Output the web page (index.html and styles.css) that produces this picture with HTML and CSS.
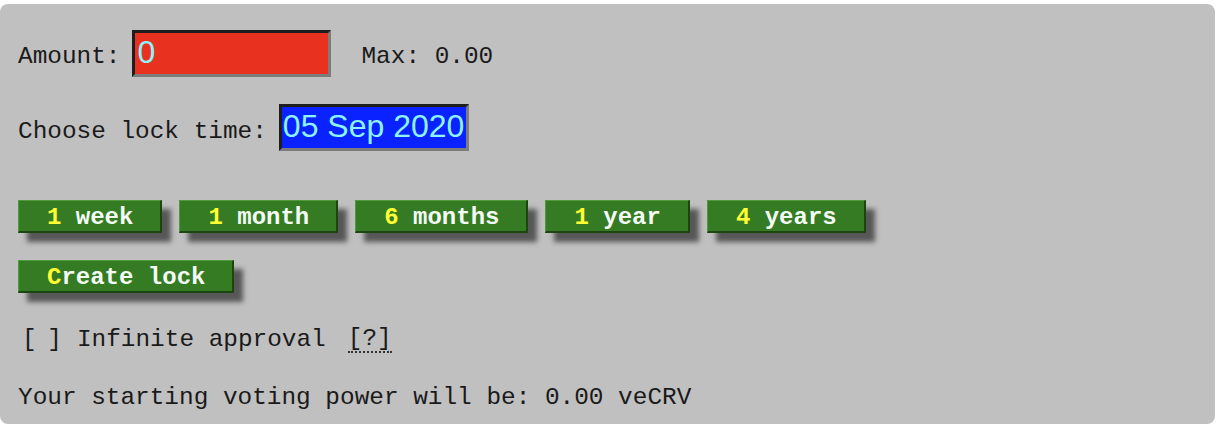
FILE: index.html
```html
<!DOCTYPE html>
<html>
<head>
<meta charset="utf-8">
<link rel="stylesheet" href="styles.css">
</head>
<body>
<div class="panel">
  <div class="row row-amount">
    <label class="lbl" for="amount">Amount:</label>
    <input id="amount" class="inp inp-amount" type="text" value="0">
    <span class="max">Max: 0.00</span>
  </div>
  <div class="row row-time">
    <label class="lbl" for="locktime">Choose lock time:</label>
    <input id="locktime" class="inp inp-date" type="text" value="05 Sep 2020">
  </div>
  <div class="periods">
    <button class="btn">1 week</button>
    <button class="btn">1 month</button>
    <button class="btn">6 months</button>
    <button class="btn">1 year</button>
    <button class="btn">4 years</button>
  </div>
  <div class="create">
    <button class="btn">Create lock</button>
  </div>
  <div class="approval">
    <span class="chk">[ ]</span><span class="chk-label">Infinite approval</span><span class="help">[?]</span>
  </div>
  <div class="power">Your starting voting power will be: 0.00 veCRV</div>
</div>
</body>
</html>
```
FILE: styles.css
```css
html, body {
  margin: 0;
  padding: 0;
  background: #ffffff;
}
body {
  padding-top: 4px;
  width: 1220px;
  height: 424px;
  overflow: hidden;
  box-sizing: border-box;
}
.panel {
  width: 1215px;
  height: 420px;
  box-sizing: border-box;
  background: #c0c0c0;
  border-radius: 8px;
  padding: 26px 0 0 18px;
  font-family: "Liberation Mono", "DejaVu Sans Mono", monospace;
  font-size: 24.4px;
  color: #1a1a1a;
}
.row {
  display: flex;
  align-items: center;
  height: 47px;
}
.row-time {
  margin-top: 27px;
}
.lbl {
  margin-right: 12px;
  padding-top: 5px;
}
.row-time .lbl {
  padding-top: 7px;
}
.inp {
  box-sizing: border-box;
  height: 47px;
  margin: 0;
  padding: 0 2px 2px 2px;
  border-style: solid;
  border-width: 3px;
  border-color: #1e1e1e #7c7c7c #7c7c7c #1e1e1e;
  font-family: "Liberation Sans", Arial, sans-serif;
  font-size: 32px;
  color: #8ef2ff;
  outline: none;
}
.inp-amount {
  width: 199px;
  background: #e8321f;
}
.inp-date {
  width: 190px;
  padding-left: 1px;
  background: #0a22ff;
}
.max {
  margin-left: 30px;
  padding-top: 5px;
}
.periods {
  display: flex;
  gap: 17px;
  margin-top: 49px;
}
.create {
  display: flex;
  margin-top: 27px;
}
.btn {
  box-sizing: border-box;
  height: 33px;
  margin: 0;
  padding: 4px 27px 0 28px;
  background: #357b23;
  border-style: solid;
  border-width: 1px 2px 2px 1px;
  border-color: #4f9a3a #1d4512 #1d4512 #4f9a3a;
  box-shadow: 9px 9px 5px rgba(0, 0, 0, 0.55);
  font-family: "Liberation Mono", "DejaVu Sans Mono", monospace;
  font-weight: bold;
  font-size: 24px;
  line-height: 26px;
  color: #f4fbf6;
  cursor: pointer;
}
.btn::first-letter {
  color: #ffff33;
}
.approval {
  margin-top: 32px;
  height: 30px;
  line-height: 30px;
  display: flex;
  align-items: center;
  white-space: pre;
}
.chk {
  margin-left: 4px;
  margin-right: 17px;
  letter-spacing: -2px;
}
.help {
  margin-left: 22px;
  line-height: 24px;
  border-bottom: 2px dotted #333;
}
.power {
  margin-top: 28px;
  height: 30px;
  line-height: 30px;
}
```
